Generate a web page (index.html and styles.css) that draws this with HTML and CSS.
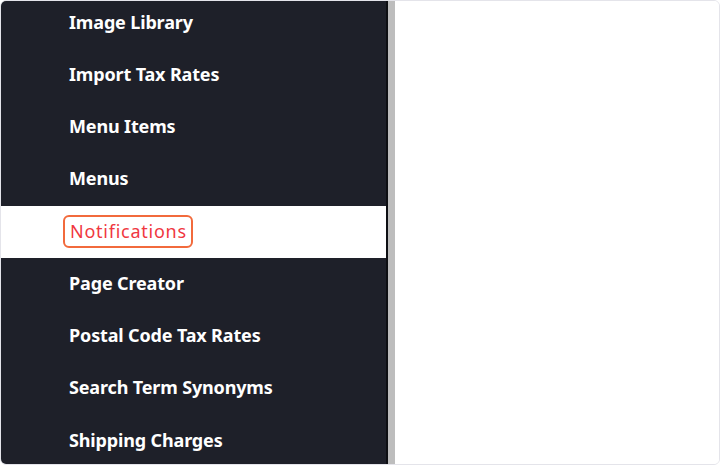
FILE: index.html
```html
<!DOCTYPE html>
<html lang="en">
<head>
<meta charset="utf-8">
<link rel="stylesheet" href="styles.css">
<title>Menu</title>
</head>
<body>
<div class="frame">
  <nav class="sidebar">
    <ul class="menu">
      <li class="item"><span class="label">Image Library</span></li>
      <li class="item"><span class="label">Import Tax Rates</span></li>
      <li class="item"><span class="label">Menu Items</span></li>
      <li class="item"><span class="label">Menus</span></li>
      <li class="item active"><span class="label">Notifications</span></li>
      <li class="item"><span class="label">Page Creator</span></li>
      <li class="item"><span class="label">Postal Code Tax Rates</span></li>
      <li class="item"><span class="label">Search Term Synonyms</span></li>
      <li class="item"><span class="label">Shipping Charges</span></li>
    </ul>
  </nav>
  <div class="scrollbar"></div>
  <main class="content"></main>
</div>
</body>
</html>
```

FILE: styles.css
```css
html, body {
  margin: 0;
  padding: 0;
  background: #ffffff;
}
body {
  width: 720px;
  height: 465px;
  font-family: "Noto Sans", "Open Sans", sans-serif;
}
.frame {
  box-sizing: border-box;
  width: 720px;
  height: 465px;
  border: 1px solid #e4e4ea;
  border-radius: 6px;
  overflow: hidden;
  display: flex;
  background: #ffffff;
}
.sidebar {
  width: 385px;
  background: #1e2029;
  border-right: 2px solid #0e0f13;
  overflow: hidden;
}
.menu {
  list-style: none;
  margin: 0;
  padding: 0;
  margin-top: -4px;
}
.item {
  height: 52.25px;
  display: flex;
  align-items: center;
  padding-left: 68px;
  padding-bottom: 3px;
  box-sizing: border-box;
}
.label {
  color: #ffffff;
  font-weight: 700;
  font-size: 18px;
  letter-spacing: -0.15px;
}
.item.active {
  background: #ffffff;
  margin-right: -2px;
  padding-left: 62px;
  padding-bottom: 1px;
}
.item.active .label {
  color: #f0383f;
  font-weight: 400;
  letter-spacing: 0.75px;
  border: 2px solid #f26a3c;
  border-radius: 6px;
  padding: 2px 4px 3px 5px;
}
.scrollbar {
  width: 7px;
  background: #bdbdbd;
}
.content {
  flex: 1;
  background: #ffffff;
}
```
